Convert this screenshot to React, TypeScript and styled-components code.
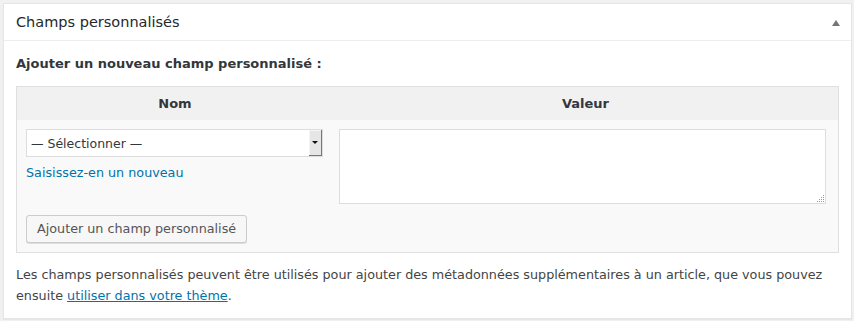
import React from "react";
import styled, { createGlobalStyle } from "styled-components";

const GlobalStyle = createGlobalStyle`
  html, body {
    margin: 0;
    padding: 0;
    background: #f1f1f1;
  }
  body {
    font-family: "DejaVu Sans", "Open Sans", sans-serif;
    font-size: 12.75px;
    color: #444;
  }
`;

const Page = styled.div`
  padding: 3px 2px 4px 3px;
`;

const Postbox = styled.div`
  background: #fff;
  border: 1px solid #e5e5e5;
  box-shadow: 0 1px 1px rgba(0, 0, 0, 0.04);
`;

const BoxHeader = styled.div`
  height: 36px;
  display: flex;
  align-items: center;
  justify-content: space-between;
  padding: 0 11px 0 12px;
  border-bottom: 1px solid #eee;
`;

const BoxTitle = styled.h2`
  margin: 0;
  font-size: 14.5px;
  font-weight: 400;
  color: #23282d;
  line-height: 1.4;
`;

const Toggle = styled.span`
  width: 0;
  height: 0;
  border-left: 4px solid transparent;
  border-right: 4px solid transparent;
  border-bottom: 6px solid #72777c;
  margin-top: 2px;
`;

const Inside = styled.div`
  padding: 13px 12px 12px;
`;

const SubTitle = styled.p`
  margin: 0 0 12px;
  font-size: 13px;
  font-weight: 700;
  line-height: 20px;
  color: #32373c;
`;

const MetaTable = styled.div`
  display: grid;
  grid-template-columns: 316px 1fr;
  border: 1px solid #dfdfdf;
  background: #f9f9f9;
`;

const HeadCell = styled.div`
  height: 33px;
  display: flex;
  align-items: center;
  justify-content: center;
  background: #f1f1f1;
  font-size: 13px;
  font-weight: 700;
  color: #32373c;
`;

const NameCell = styled.div`
  padding: 9px 10px 0 9px;
  display: flex;
  flex-direction: column;
`;

const ValueCell = styled.div`
  padding: 9px 12px 0 6px;
`;

const ButtonRow = styled.div`
  grid-column: 1 / -1;
  padding: 11px 10px 9px 9px;
`;

const SelectBox = styled.div`
  width: 297px;
  height: 28px;
  box-sizing: border-box;
  border: 1px solid #ddd;
  background: #fff;
  display: flex;
  align-items: stretch;
  color: #32373c;
  font-size: 12.5px;
`;

const SelectText = styled.span`
  flex: 1;
  padding-left: 4px;
  display: flex;
  align-items: center;
`;

const SelectArrow = styled.span`
  width: 12px;
  background: #e6e6e6;
  border-right: 1px solid #777;
  border-bottom: 1px solid #777;
  box-shadow: inset 1px 1px 0 #f4f4f4;
  display: flex;
  align-items: center;
  justify-content: center;

  &::after {
    content: "";
    width: 0;
    height: 0;
    border-left: 3px solid transparent;
    border-right: 3px solid transparent;
    border-top: 3px solid #111;
  }
`;

const NewLink = styled.a`
  margin-top: 7px;
  line-height: 18px;
  color: #0073aa;
  text-decoration: none;
  align-self: flex-start;
`;

const AreaWrap = styled.div`
  position: relative;
  height: 75px;
`;

const ValueArea = styled.textarea`
  display: block;
  width: 100%;
  height: 100%;
  box-sizing: border-box;
  border: 1px solid #ddd;
  background: #fff;
  resize: none;
  margin: 0;
  font: inherit;
`;

const Grip = styled.svg`
  position: absolute;
  right: 2px;
  bottom: 2px;
`;

const AddButton = styled.button`
  height: 28px;
  box-sizing: border-box;
  padding: 0 10px;
  border: 1px solid #ccc;
  border-radius: 3px;
  background: #f7f7f7;
  box-shadow: 0 1px 0 #ddd;
  color: #555;
  font-family: inherit;
  font-size: 12.75px;
  line-height: 26px;
`;

const Help = styled.p`
  margin: 11px 0 0;
  line-height: 21px;
  color: #444;
`;

const HelpLink = styled.a`
  color: #0073aa;
  text-decoration: underline;
`;

const gripDots = [
  [6, 0],
  [6, 2],
  [4, 2],
  [6, 4],
  [4, 4],
  [2, 4],
  [6, 6],
  [4, 6],
  [2, 6],
  [0, 6],
];

export default function App() {
  return (
    <Page>
      <GlobalStyle />
      <Postbox>
        <BoxHeader>
          <BoxTitle>Champs personnalisés</BoxTitle>
          <Toggle />
        </BoxHeader>
        <Inside>
          <SubTitle>Ajouter un nouveau champ personnalisé :</SubTitle>
          <MetaTable>
            <HeadCell>Nom</HeadCell>
            <HeadCell>Valeur</HeadCell>
            <NameCell>
              <SelectBox>
                <SelectText>— Sélectionner —</SelectText>
                <SelectArrow />
              </SelectBox>
              <NewLink href="#">Saisissez-en un nouveau</NewLink>
            </NameCell>
            <ValueCell>
              <AreaWrap>
                <ValueArea />
                <Grip width="7" height="7" viewBox="0 0 7 7">
                  {gripDots.map(([x, y], i) => (
                    <rect key={i} x={x} y={y} width="1" height="1" fill="#999" />
                  ))}
                </Grip>
              </AreaWrap>
            </ValueCell>
            <ButtonRow>
              <AddButton>Ajouter un champ personnalisé</AddButton>
            </ButtonRow>
          </MetaTable>
          <Help>
            Les champs personnalisés peuvent être utilisés pour ajouter des
            métadonnées supplémentaires à un article, que vous pouvez ensuite{" "}
            <HelpLink href="#">utiliser dans votre thème</HelpLink>.
          </Help>
        </Inside>
      </Postbox>
    </Page>
  );
}
